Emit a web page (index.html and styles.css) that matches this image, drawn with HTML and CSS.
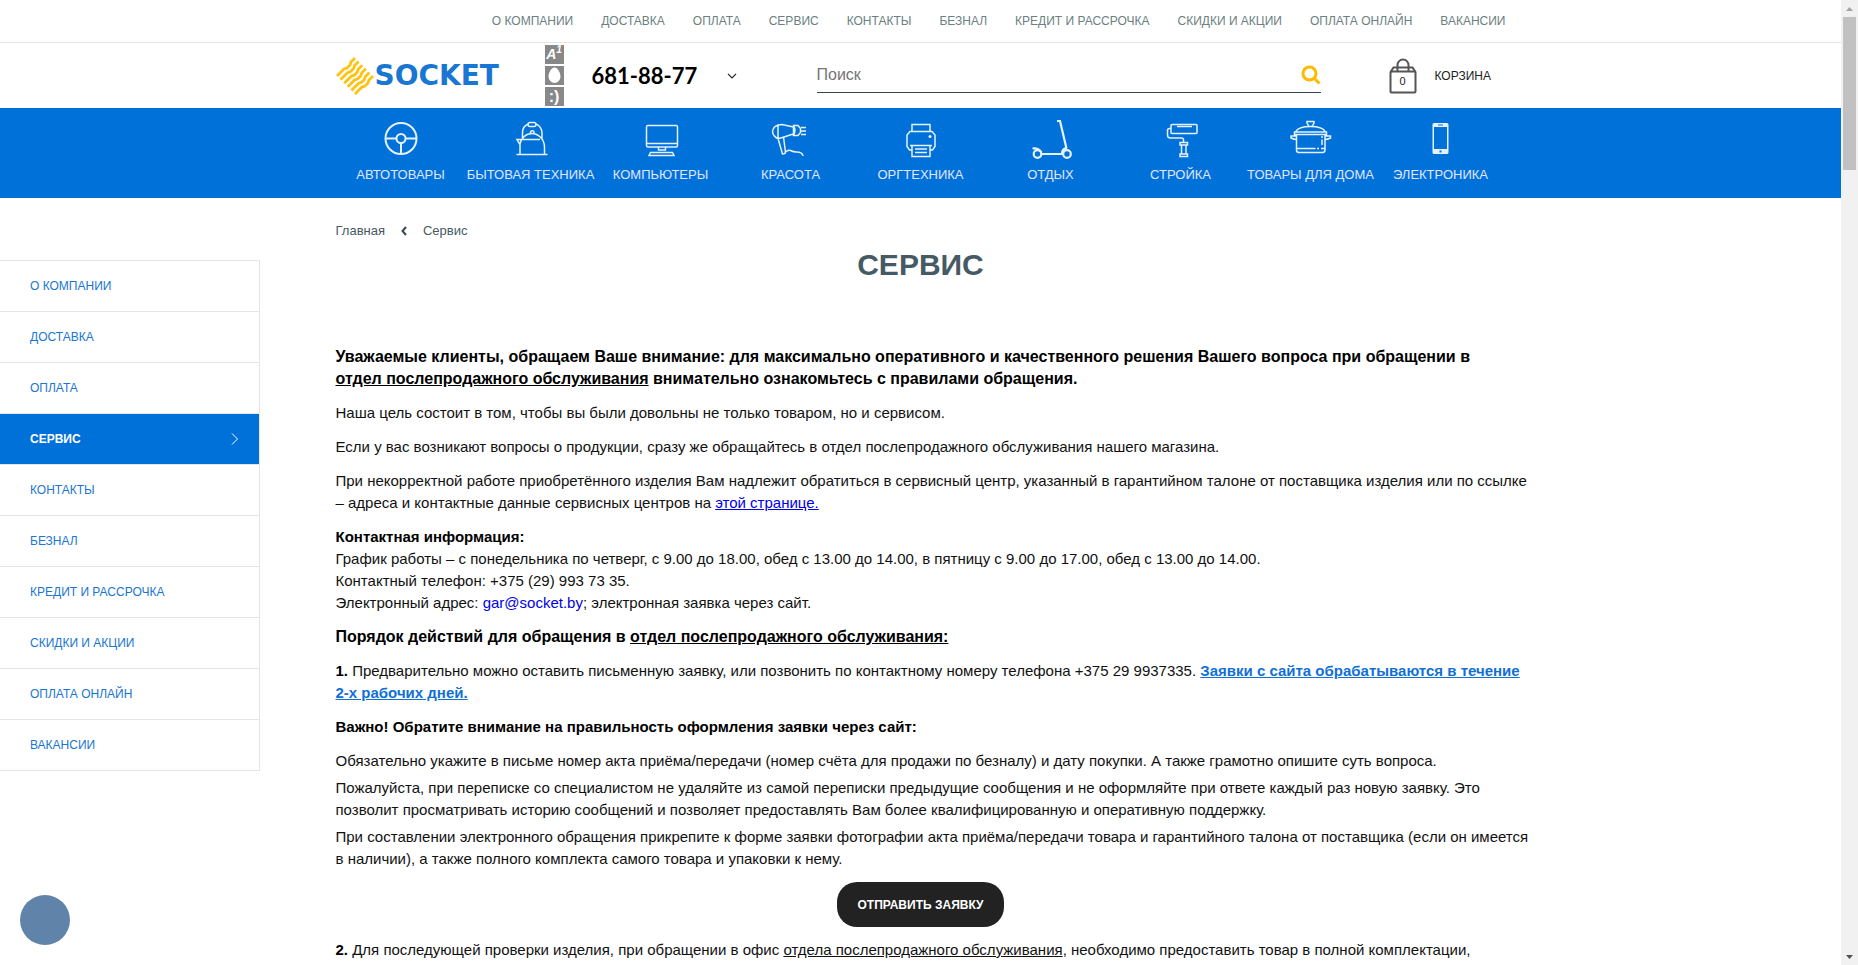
FILE: index.html
```html
<!DOCTYPE html>
<html lang="ru">
<head>
<meta charset="utf-8">
<title>Сервис</title>
<link rel="stylesheet" href="styles.css">
</head>
<body>
<div class="page">
  <div class="topbar">
    <nav class="container topnav" aria-label="Информация">
      <a href="#">О КОМПАНИИ</a><a href="#">ДОСТАВКА</a><a href="#">ОПЛАТА</a><a href="#">СЕРВИС</a><a href="#">КОНТАКТЫ</a><a href="#">БЕЗНАЛ</a><a href="#">КРЕДИТ И РАССРОЧКА</a><a href="#">СКИДКИ И АКЦИИ</a><a href="#">ОПЛАТА ОНЛАЙН</a><a href="#">ВАКАНСИИ</a>
    </nav>
  </div>
  <header class="container header">
    <a class="logo" href="#">
      <svg width="38" height="38" viewBox="0 0 38 38" fill="none" stroke="#ffc20e" stroke-width="2.800">
        <path d="M1 19l7-7 3-1 3-3 1-3 4-4M4.600 22.600l7-7 3-1 3-3 1-3 4-4M8.200 26.200l7-7 3-1 3-3 1-3 4-4M11.800 29.800l7-7 3-1 3-3 1-3 4-4M15.400 33.400l7-7 3-1 3-3 1-3 4-4M19 37l7-7 3-1 3-3 1-3 4-4"/>
      </svg>
      <span>SOCKET</span>
    </a>
    <div class="operators">
      <span class="op op-a1">A<sup>1</sup></span>
      <span class="op"><svg width="19" height="19" viewBox="0 0 19 19"><path d="M9.500 1.500c3 0 6 5 6 9a6 6.500 0 0 1-12 0c0-4 3-9 6-9z" fill="#fff"/></svg></span>
      <span class="op">:)</span>
    </div>
    <button class="phone" type="button">681-88-77
      <svg width="10" height="6" viewBox="0 0 10 6" fill="none" stroke="#222" stroke-width="1.200"><path d="M1 .8 5 4.800 9 .8"/></svg>
    </button>
    <form class="search">
      <input type="search" placeholder="Поиск" aria-label="Поиск">
      <button type="button" aria-label="Найти"><svg width="20" height="20" viewBox="0 0 20 20" fill="none" stroke="#ffb900" stroke-width="3"><circle cx="8.500" cy="8.500" r="6.500"/><path d="m13 13 5.500 5.500"/></svg></button>
    </form>
    <a class="cart" href="#">
      <span class="bag"><svg width="28" height="36" viewBox="0 0 28 36" fill="none" stroke="#555" stroke-width="2"><rect x="1.500" y="13.500" width="25" height="21" rx="1"/><path d="M1.500 14 4.500 9.500h19l3 4.500M8.500 13V7a5.500 5.500 0 0 1 11 0v6"/></svg><span class="count">0</span></span>
      КОРЗИНА
    </a>
  </header>
  <div class="catbar">
    <nav class="container cats" aria-label="Каталог">
      <a href="#"><svg viewBox="0 0 42 42"><g stroke-width="2"><circle cx="21" cy="21.500" r="15.500"/><circle cx="21" cy="21.500" r="4.500"/><path d="M5.500 21.500h11M25.500 21.500h11M21 26v11"/></g></svg>АВТОТОВАРЫ</a>
      <a href="#"><svg viewBox="0 0 42 42"><path d="M6.500 37.500h31M10 37V27.500L7 22.500h6M10 27c1-6 6-10.500 12-10.500S34.500 22 34.500 30v7M7 22.500h23M12.500 21.500V16c0-5 3-8 6-9M25.500 7c4 1 6.500 5 6.500 9v6"/><rect x="18" y="5.500" width="8" height="4" rx="2"/><path d="M20.500 17v-1.500c0-2.500 3.500-2.500 3.500 0V17"/></svg>БЫТОВАЯ ТЕХНИКА</a>
      <a href="#"><svg viewBox="0 0 42 42"><rect x="6.500" y="8.500" width="31" height="21.500" rx="1.500"/><path d="M6.500 26.500h31M18.500 30v3h7v-3"/><path d="M10.500 35.500h22l1.500 3H9z"/></svg>КОМПЬЮТЕРЫ</a>
      <a href="#"><svg viewBox="0 0 42 42"><path d="M23.500 10 12 7.500C6 7.500 2.500 11 2.500 14.500S6 21 8 21.500c4-.5 10-3 15.500-4.500M8 8.500v13l4.500 15.500c2 0 3-1 3-2L13.500 20M14.500 35c3 0 3-3 6-1.500s4 1.500 6 1.500 6 0 6.500 4M23.500 8.500h4.500l2.500 3v4l-2.500 3h-4.500zM23.500 9c2 3 2 6 0 9M31 10.500h5M31 14h5M31 17.500h5"/></svg>КРАСОТА</a>
      <a href="#"><svg viewBox="0 0 42 42"><path d="M12 14V7.500h18V14M12 33H9.500L7 29.500V18l3-3.500h22l3 3.500v11.500L32.500 33H30M10 28.500h22M12 28.500v11h18v-11M15 32h12M15 35.500h12"/><circle cx="30" cy="19.500" r=".8"/></svg>ОРГТЕХНИКА</a>
      <a href="#"><svg viewBox="0 0 42 42"><g stroke-width="2.200"><circle cx="7.500" cy="37" r="3.800"/><circle cx="37" cy="37" r="3.800"/><path d="M11.500 37H33M2.500 31.500c4-.5 7 .5 9 4M27 4h3l6.500 27.500M32 36c0-3 2-5 5-4.500"/></g></svg>ОТДЫХ</a>
      <a href="#"><svg viewBox="0 0 42 42"><rect x="11" y="7.500" width="26" height="9" rx="1"/><path d="M11 11.500H9.500q-2 0-2 2V18q0 3 3 3h11q2 0 2 2v2.500M17 9.500h15M20 25.500h7.500V28h-7.500zM20 37h7.500v2.500h-7.500zM21.500 28v9M26 28v9"/></svg>СТРОЙКА</a>
      <a href="#"><svg viewBox="0 0 42 42"><path d="M6.500 17.500V33q0 2.500 2.500 2.500h23.500q2.500 0 2.500-2.500V17.500M4.500 15h32v2.500h-32zM5.500 15C8 10 14 9.500 20.500 9.500S33 10 35.500 15M19 9.500 17 6V4.500h7V6l-2 3.500M6.500 19H1v2q3 1.500 5.500 1.500M35 19h5.500v2q-3 1.500-5.500 1.500M6.500 31.500h19M27 31.500h2M31 31.500h4M32 19v2M32 22.500V28"/></svg>ТОВАРЫ ДЛЯ ДОМА</a>
      <a href="#"><svg viewBox="0 0 42 42"><path fill="#e5f1fc" stroke="none" fill-rule="evenodd" d="M14 6h13q1.500 0 1.500 1.500v28q0 1.500-1.500 1.500H14q-1.500 0-1.500-1.500v-28Q12.500 6 14 6zM14 10v22h13V10zM18 7.500v1h5v-1zM19.500 33.500v2h2v-2z"/></svg>ЭЛЕКТРОНИКА</a>
    </nav>
  </div>
  <div class="body">
    <nav class="side" aria-label="Разделы">
      <a href="#">О КОМПАНИИ</a>
      <a href="#">ДОСТАВКА</a>
      <a href="#">ОПЛАТА</a>
      <a href="#" class="active">СЕРВИС <svg width="8" height="12" viewBox="0 0 8 12" fill="none" stroke="#fff"><path d="m1 .5 5.500 5.500L1 11.500"/></svg></a>
      <a href="#">КОНТАКТЫ</a>
      <a href="#">БЕЗНАЛ</a>
      <a href="#">КРЕДИТ И РАССРОЧКА</a>
      <a href="#">СКИДКИ И АКЦИИ</a>
      <a href="#">ОПЛАТА ОНЛАЙН</a>
      <a href="#">ВАКАНСИИ</a>
    </nav>
    <main class="content">
      <div class="crumbs"><a href="#">Главная</a><svg width="6" height="10" viewBox="0 0 6 10" fill="none" stroke="#37474f" stroke-width="2"><path d="M5 1 1.500 5 5 9"/></svg><span>Сервис</span></div>
      <h1>СЕРВИС</h1>
      <p class="lead">Уважаемые клиенты, обращаем Ваше внимание: для максимально оперативного и качественного решения Вашего вопроса при обращении в<br><u>отдел послепродажного обслуживания</u> внимательно ознакомьтесь с правилами обращения.</p>
      <p>Наша цель состоит в том, чтобы вы были довольны не только товаром, но и сервисом.</p>
      <p>Если у вас возникают вопросы о продукции, сразу же обращайтесь в отдел послепродажного обслуживания нашего магазина.</p>
      <p>При некорректной работе приобретённого изделия Вам надлежит обратиться в сервисный центр, указанный в гарантийном талоне от поставщика изделия или по ссылке<br>– адреса и контактные данные сервисных центров на <a class="underlined" href="#">этой странице.</a></p>
      <p><b>Контактная информация:</b><br>График работы – с понедельника по четверг, с 9.00 до 18.00, обед с 13.00 до 14.00, в пятницу с 9.00 до 17.00, обед с 13.00 до 14.00.<br>Контактный телефон: +375 (29) 993 73 35.<br>Электронный адрес: <a href="#">gar@socket.by</a>; электронная заявка через сайт.</p>
      <p class="lead">Порядок действий для обращения в <u>отдел послепродажного обслуживания:</u></p>
      <p><b>1.</b> Предварительно можно оставить письменную заявку, или позвонить по контактному номеру телефона +375 29 9937335. <a class="notice" href="#">Заявки с сайта обрабатываются в течение<br>2-х рабочих дней.</a></p>
      <p><b>Важно! Обратите внимание на правильность оформления заявки через сайт:</b></p>
      <p class="tight">Обязательно укажите в письме номер акта приёма/передачи (номер счёта для продажи по безналу) и дату покупки. А также грамотно опишите суть вопроса.</p>
      <p class="tight">Пожалуйста, при переписке со специалистом не удаляйте из самой переписки предыдущие сообщения и не оформляйте при ответе каждый раз новую заявку. Это<br>позволит просматривать историю сообщений и позволяет предоставлять Вам более квалифицированную и оперативную поддержку.</p>
      <p>При составлении электронного обращения прикрепите к форме заявки фотографии акта приёма/передачи товара и гарантийного талона от поставщика (если он имеется<br>в наличии), а также полного комплекта самого товара и упаковки к нему.</p>
      <button class="send" type="button">ОТПРАВИТЬ ЗАЯВКУ</button>
      <p><b>2.</b> Для последующей проверки изделия, при обращении в офис <u>отдела послепродажного обслуживания</u>, необходимо предоставить товар в полной комплектации,</p>
    </main>
  </div>
</div>
<div class="scroll" aria-hidden="true">
  <svg width="17" height="17" viewBox="0 0 17 17"><path d="M5 11h7L8.500 7z" fill="#a3a3a3"/></svg>
  <div class="thumb"></div>
  <svg class="down" width="17" height="17" viewBox="0 0 17 17"><path d="M5 7h7l-3.500 4z" fill="#505050"/></svg>
</div>
<button class="chat" type="button" aria-label="Чат"></button>
</body>
</html>
```

FILE: styles.css
```css
* { box-sizing: border-box; }
body {
  margin: 0;
  height: 100vh;
  display: flex;
  overflow: hidden;
  background: #fff;
  color: #111;
  font: 15px/22px "Liberation Sans", Arial, sans-serif;
}
a { text-decoration: none; }
button { border: 0; background: none; padding: 0; font: inherit; cursor: pointer; }
.page { flex: 1; min-width: 0; overflow: hidden; }
.container { max-width: 1170px; margin: 0 auto; }

.topbar { border-bottom: 1px solid #e5e5e5; }
.topnav {
  display: flex;
  justify-content: flex-end;
  gap: 28px;
  padding: 10px 0;
  font-size: 12px;
}
.topnav a { color: #6b807f; white-space: nowrap; }

.header { display: flex; align-items: center; height: 65px; }
.logo {
  display: flex;
  align-items: center;
  gap: 1px;
  width: 209px;
  color: #1976d2;
  font: bold 28px/38px "DejaVu Sans", sans-serif;
}
.operators { display: grid; gap: 2px; width: 47px; }
.op {
  display: flex;
  align-items: center;
  justify-content: center;
  width: 19px;
  height: 19px;
  background: #888;
  color: #fff;
  font-size: 16px;
  font-weight: bold;
  line-height: 19px;
}
.op-a1 { font-size: 14px; font-style: italic; }
.op-a1 sup { font-size: 10px; line-height: 10px; align-self: flex-start; }
.phone {
  display: flex;
  align-items: center;
  gap: 30px;
  width: 225px;
  color: #000;
  font: bold 22px/30px Lato, sans-serif;
}
.search {
  display: flex;
  align-items: center;
  width: 504px;
  height: 34px;
  border-bottom: 1px solid #37474f;
}
.search input {
  flex: 1;
  border: 0;
  outline: 0;
  padding: 0;
  background: none;
  font: 16px/22px "Liberation Sans", Arial, sans-serif;
}
.search input::placeholder { color: #757575; opacity: 1; }
.search button { display: flex; }
.cart {
  display: flex;
  align-items: center;
  gap: 18px;
  margin-left: 68px;
  color: #222;
  font-size: 12px;
}
.bag { position: relative; display: flex; }
.count { position: absolute; left: 0; right: 0; bottom: 2px; font-size: 11px; text-align: center; }

.catbar { background: #0071d8; }
.cats { display: grid; grid-template-columns: repeat(9, 1fr); padding: 9px 0 12px; }
.cats a {
  display: flex;
  flex-direction: column;
  align-items: center;
  gap: 5px;
  color: #e0e6ff;
  font-size: 13px;
  white-space: nowrap;
}
.cats svg { width: 42px; height: 42px; fill: none; stroke: #e5f1fc; stroke-width: 1.5; }

.body {
  display: grid;
  grid-template-columns: minmax(0, 1fr) minmax(0, 1170px) minmax(0, 1fr);
  align-items: start;
}
.side {
  width: 260px;
  margin-top: 62px;
  border: 1px solid #e5e5e5;
  border-width: 1px 1px 0 0;
}
.side a {
  display: flex;
  align-items: center;
  justify-content: space-between;
  height: 51px;
  padding: 0 20px 0 30px;
  border-bottom: 1px solid #e5e5e5;
  color: #1976d2;
  font-size: 12px;
}
.side .active { background: #0071d8; color: #fff; font-weight: bold; }

.content { padding-top: 22px; white-space: nowrap; }
.crumbs { display: flex; align-items: center; gap: 16px; color: #455a64; font-size: 13px; }
.crumbs a { color: inherit; }
h1 {
  margin: 4px 0 62px;
  color: #455a64;
  font-size: 30px;
  line-height: 38px;
  text-align: center;
}
p { margin: 0 0 12px; }
b, .lead { color: #000; }
.lead { font-size: 16px; font-weight: bold; }
.tight { margin-bottom: 5px; }
p a { color: #00e; }
.underlined { text-decoration: underline; }
p .notice { color: #1170d6; font-weight: bold; text-decoration: underline; }
.send {
  display: block;
  margin: 0 auto 12px;
  padding: 12px 20px 11px;
  border-radius: 20px;
  background: #222;
  color: #fff;
  font-size: 12px;
  font-weight: bold;
}

.scroll {
  display: flex;
  flex-direction: column;
  width: 17px;
  background: #f1f1f1;
}
.thumb { height: 153px; margin: 0 2px; background: #c1c1c1; }
.down { margin-top: auto; }
.chat {
  position: fixed;
  left: 20px;
  bottom: 20px;
  width: 50px;
  height: 50px;
  border-radius: 50%;
  background: #6083a9;
}
```
